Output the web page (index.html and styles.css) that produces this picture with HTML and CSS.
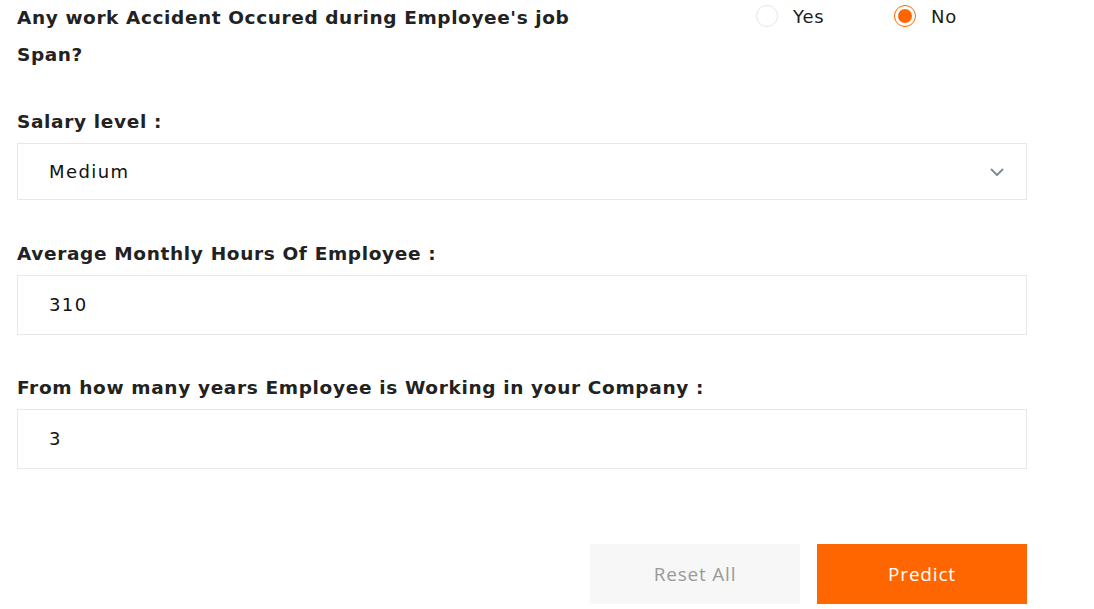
FILE: index.html
```html
<!DOCTYPE html>
<html lang="en">
<head>
<meta charset="utf-8">
<title>Employee form</title>
<link rel="stylesheet" href="styles.css">
</head>
<body>
<form class="form">
  <div class="question-row">
    <div class="question">Any work Accident Occured during Employee's job Span?</div>
    <div class="radios">
      <label class="radio"><span class="dot"></span><span class="radio-text">Yes</span></label>
      <label class="radio checked"><span class="dot"></span><span class="radio-text">No</span></label>
    </div>
  </div>

  <div class="field field-first">
    <div class="label">Salary level :</div>
    <div class="select">
      <span class="value">Medium</span>
      <svg class="chevron" width="14" height="9" viewBox="0 0 14 9"><path d="M1.5 1.5 L7 7 L12.5 1.5" fill="none" stroke="#7d8797" stroke-width="1.8" stroke-linecap="round" stroke-linejoin="round"/></svg>
    </div>
  </div>

  <div class="field">
    <div class="label">Average Monthly Hours Of Employee :</div>
    <div class="input"><span class="value">310</span></div>
  </div>

  <div class="field">
    <div class="label">From how many years Employee is Working in your Company :</div>
    <div class="input"><span class="value">3</span></div>
  </div>

  <div class="actions">
    <button type="button" class="btn btn-reset">Reset All</button>
    <button type="button" class="btn btn-predict">Predict</button>
  </div>
</form>
</body>
</html>
```

FILE: styles.css
```css
* { box-sizing: border-box; }
html, body { margin: 0; padding: 0; background: #fff; }
body {
  font-family: "DejaVu Sans", "Inter", sans-serif;
  color: #1e1e1e;
}
.form {
  width: 1010px;
  margin-left: 17px;
}
.question-row {
  display: flex;
  align-items: flex-start;
}
.question {
  flex: none;
  width: 588px;
  font-size: 18.5px;
  font-weight: 700;
  letter-spacing: 0.6px;
  line-height: 37px;
  margin-top: -1px;
  color: #222;
}
.radios {
  display: flex;
  margin-left: 151px;
}
.radio {
  display: flex;
  align-items: center;
  height: 32px;
  font-size: 18px;
  letter-spacing: 0.8px;
  color: #1d1d1d;
  width: 138px;
}
.dot {
  width: 22px;
  height: 22px;
  border-radius: 50%;
  border: 1px solid #e6e6e6;
  background: #fff;
  margin-right: 15px;
  position: relative;
  flex: none;
}
.radio.checked .dot {
  border: 1.5px solid #ff6600;
}
.radio.checked .dot::after {
  content: "";
  position: absolute;
  left: 2.5px;
  top: 2.5px;
  width: 14px;
  height: 14px;
  border-radius: 50%;
  background: #ff6600;
}
.field { margin-top: 39.5px; }
.field-first { margin-top: 35px; }
.label {
  font-size: 18.5px;
  font-weight: 700;
  letter-spacing: 0.65px;
  line-height: 27px;
  color: #222;
  margin-bottom: 8px;
}
.select, .input {
  border: 1px solid #e8e8e8;
  display: flex;
  align-items: center;
  padding-left: 31px;
  font-size: 18px;
  letter-spacing: 1.4px;
  color: #111;
}
.select { height: 57px; padding-right: 22px; justify-content: space-between; }
.input { height: 60px; }
.value { line-height: 1; }
.chevron { display: block; margin-top: 1px; }
.actions {
  display: flex;
  justify-content: flex-end;
  gap: 17px;
  margin-top: 75px;
}
.btn {
  width: 210px;
  height: 60px;
  border: none;
  font-family: "Open Sans", "Inter", sans-serif;
  font-size: 19px;
  letter-spacing: 0.8px;
  cursor: pointer;
}
.btn-reset { background: #f7f7f7; color: #9a9a9a; }
.btn-predict { background: #ff6600; color: #fff; }
```
